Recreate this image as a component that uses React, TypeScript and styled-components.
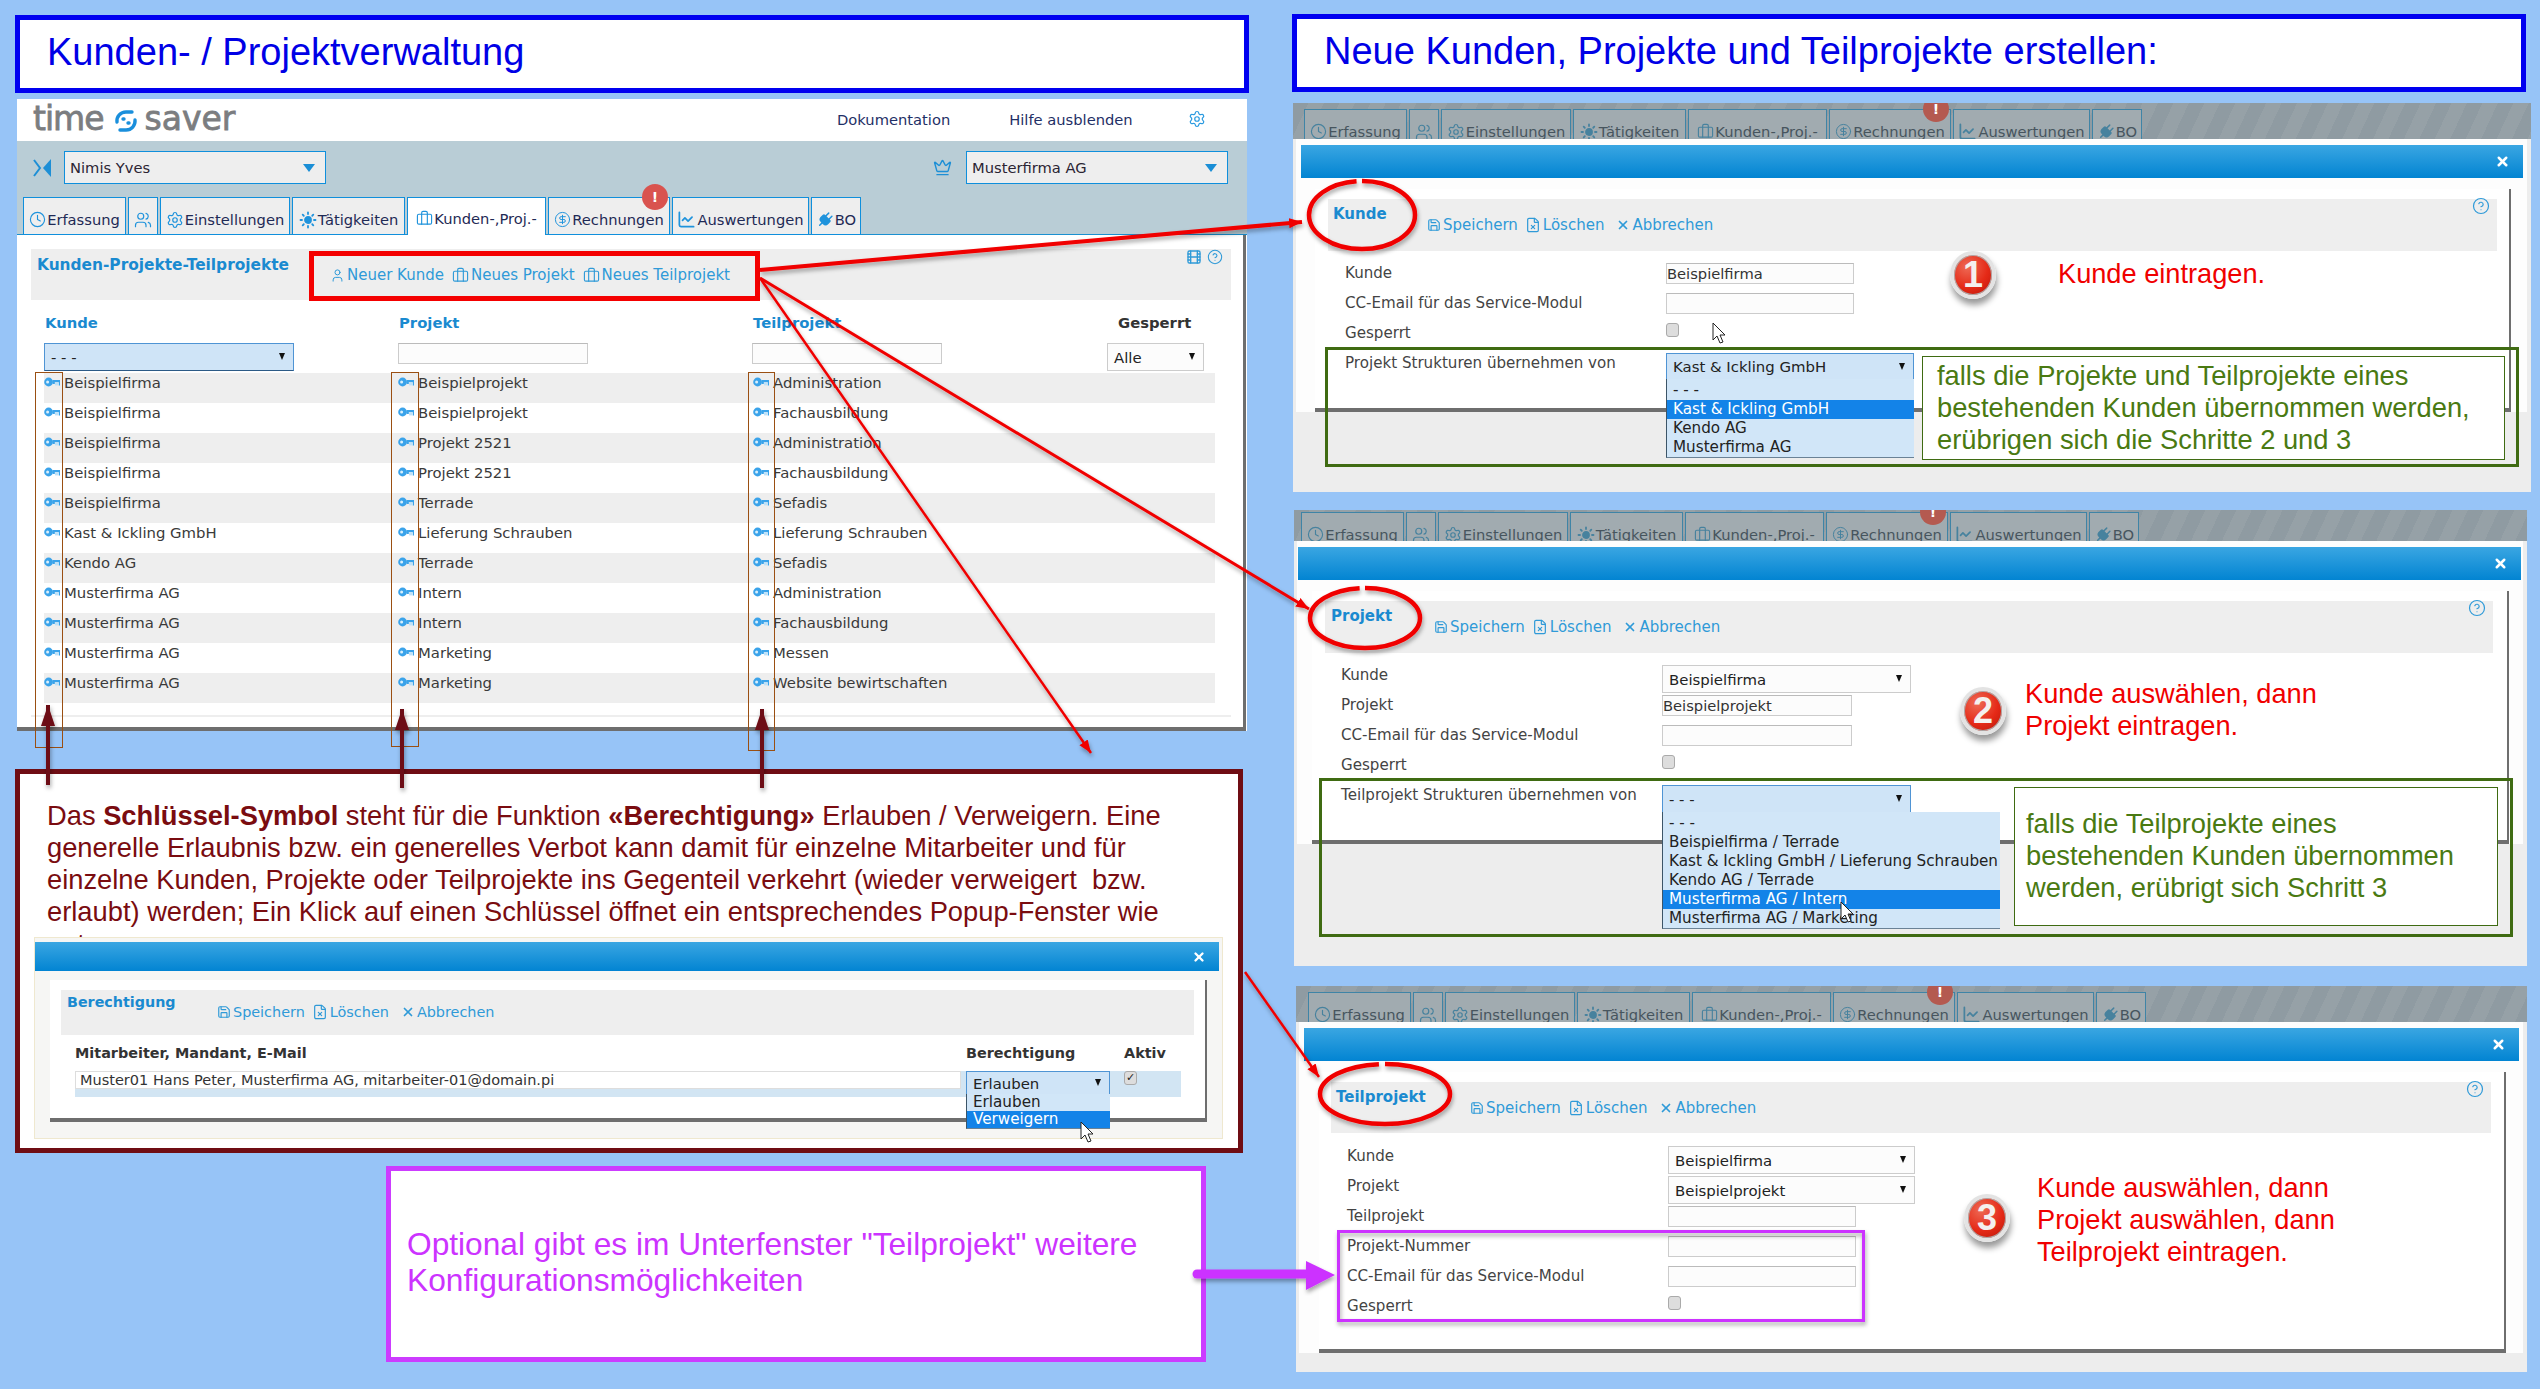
import type { ReactNode } from 'react';
import styled, { createGlobalStyle } from 'styled-components';
import {
  Briefcase,
  ChartLine,
  CircleDollarSign,
  CircleHelp,
  Clock,
  Crown,
  FileX,
  Film,
  Plug,
  Save,
  Settings,
  Sun,
  User,
  Users,
  X,
} from 'lucide-react';

const APP_FONT = '"DejaVu Sans", Verdana, sans-serif';
const NOTE_FONT = '"Liberation Sans", Arial, sans-serif';
const LINK_BLUE = '#2f9ad8';

const GlobalStyle = createGlobalStyle`
  html, body {
    margin: 0;
    padding: 0;
    background: #97c4f7;
  }
  * {
    box-sizing: border-box;
  }
`;

const Page = styled.div`
  position: relative;
  width: 2540px;
  height: 1389px;
  overflow: hidden;
  padding: 14px 0 0 15px;
  display: grid;
  grid-template-columns: 1234px 1240px;
  column-gap: 43px;
  align-items: start;
  background: #97c4f7;
  font-family: ${APP_FONT};
`;

const LeftColumn = styled.div`
  display: flex;
  flex-direction: column;
  padding-top: 1px;
`;

const RightColumn = styled.div`
  display: flex;
  flex-direction: column;
`;

const TitleBox = styled.div`
  width: 1234px;
  height: 78px;
  border: 5px solid #0000f0;
  background: #fff;
  padding: 0 0 3px 27px;
  display: flex;
  align-items: center;
`;

const TitleText = styled.h1`
  margin: 0;
  font-family: ${NOTE_FONT};
  font-size: 38px;
  font-weight: 400;
  color: #0000e6;
  white-space: nowrap;
`;

/* ---- main app screenshot ---- */

const AppPanel = styled.section`
  margin: 6px 0 0 2px;
  width: 1230px;
  height: 632px;
  background: #fff;
`;

const AppHeader = styled.header`
  height: 42px;
  display: flex;
  align-items: center;
  padding: 0 0 2px 16px;
`;

const Logo = styled.div`
  display: flex;
  align-items: center;
  width: 202px;
  font-size: 33px;
  line-height: 32px;
  color: #7b7d80;
  -webkit-text-stroke: 0.8px #7b7d80;
`;

const LogoWord = styled.span<{ $spacing: number }>`
  letter-spacing: ${(p) => p.$spacing}px;
`;

const LogoMarkWrap = styled.span`
  display: flex;
  margin: 3px 7px 0 10px;
`;

const HeaderLink = styled.a<{ $left: number }>`
  margin-left: ${(p) => p.$left}px;
  font-size: 14.7px;
  color: #1f2f66;
  white-space: nowrap;
`;

const GearWrap = styled.span`
  margin-left: 55px;
  display: flex;
  color: #2a9ae0;
`;

const Toolbar = styled.div`
  height: 94px;
  background: #b9cdd6;
  border-bottom: 1.5px solid #1a90d0;
  padding-top: 10px;
`;

const PickerRow = styled.div`
  display: flex;
  align-items: center;
  padding: 0 19px 0 16px;
`;

const PickerIcon = styled.span<{ $push?: boolean }>`
  display: flex;
  margin-left: ${(p) => (p.$push ? 'auto' : '0')};
  color: #1d8fd6;
`;

const Picker = styled.div<{ $left: number }>`
  margin-left: ${(p) => p.$left}px;
  width: 262px;
  height: 33px;
  border: 1.5px solid #0f8fdc;
  background: #eee;
  padding: 0 10px 0 5px;
  display: flex;
  align-items: center;
  justify-content: space-between;
  font-size: 14.7px;
  color: #2b2433;
`;

const PickerCaret = styled.span`
  width: 0;
  height: 0;
  border-left: 6px solid transparent;
  border-right: 6px solid transparent;
  border-top: 8px solid #1a8ed6;
`;

const TabStrip = styled.nav<{ $left: number; $top: number }>`
  margin: ${(p) => p.$top}px 0 0 ${(p) => p.$left}px;
  display: flex;
  position: relative;
`;

const Tab = styled.div<{ $w: number; $active?: boolean; $faded?: boolean }>`
  width: ${(p) => p.$w}px;
  height: 38px;
  margin-right: 2px;
  flex: none;
  border: 1.5px solid ${(p) => (p.$faded ? '#3f84a6' : '#0f8fdc')};
  border-bottom: ${(p) => (p.$active ? 'none' : undefined)};
  background: ${(p) => (p.$faded ? '#a1abb0' : p.$active ? '#fff' : '#eee')};
  color: ${(p) => (p.$faded ? '#47555e' : '#1f2a55')};
  padding-top: ${(p) => (p.$active ? 4 : 7)}px;
  display: flex;
  align-items: center;
  justify-content: center;
  gap: 1px;
  font-size: 14.7px;
  white-space: nowrap;
  svg {
    color: ${(p) => (p.$faded ? '#47829e' : '#1f93dc')};
    flex: none;
  }
`;

const TabBadge = styled.span<{ $x: number; $faded?: boolean }>`
  position: absolute;
  left: ${(p) => p.$x}px;
  top: -13px;
  width: 26px;
  height: 26px;
  border-radius: 50%;
  background: ${(p) => (p.$faded ? '#b45a50' : '#d9534f')};
  color: #fff;
  font-size: 14px;
  font-weight: 700;
  text-align: center;
  line-height: 26px;
`;

const TiltedPlug = styled(Plug)`
  transform: rotate(45deg);
`;

const AppBody = styled.div`
  width: 1229px;
  height: 496px;
  border-right: 3px solid #6e6e6e;
  border-bottom: 4px solid #6e6e6e;
  padding: 14px 12px 0 14px;
`;

const PanelHead = styled.div`
  height: 51px;
  background: #eee;
  display: flex;
  align-items: flex-start;
`;

const PanelTitle = styled.h2`
  margin: 6px 0 0 6px;
  width: 290px;
  flex: none;
  font-size: 15.4px;
  line-height: 20px;
  font-weight: 700;
  color: #1a8ad0;
  white-space: nowrap;
`;

const ActionBar = styled.div<{ $top: number; $left: number; $size: number; $gap: number }>`
  margin: ${(p) => p.$top}px 0 0 ${(p) => p.$left}px;
  display: flex;
  gap: ${(p) => p.$gap}px;
  font-size: ${(p) => p.$size}px;
  line-height: 20px;
  color: ${LINK_BLUE};
  white-space: nowrap;
`;

const Action = styled.span<{ $extra?: number }>`
  display: flex;
  align-items: center;
  gap: 2px;
  margin-left: ${(p) => p.$extra ?? 0}px;
`;

const PanelTools = styled.div`
  margin: 0 8px 0 auto;
  display: flex;
  gap: 5px;
  color: ${LINK_BLUE};
`;

const TableWrap = styled.div`
  padding: 0 16px 13px 13px;
  border-bottom: 2px solid #eee;
  height: 417px;
`;

const TableGrid = styled.div`
  display: grid;
  grid-template-columns: 354px 354px 355px 108px;
`;

const ColHead = styled.div<{ $dark?: boolean }>`
  padding: 13px 0 0 ${(p) => (p.$dark ? 11 : 1)}px;
  height: 43px;
  font-size: 14.8px;
  line-height: 20px;
  font-weight: 700;
  color: ${(p) => (p.$dark ? '#333' : '#1a8ad0')};
`;

const FilterCell = styled.div`
  height: 30px;
`;

const DataRow = styled.div`
  grid-column: 1 / -1;
  height: 30px;
  display: grid;
  grid-template-columns: 354px 355px 462px;
  &:nth-of-type(odd) {
    background: #eee;
  }
`;

const DataCell = styled.div`
  display: flex;
  align-items: flex-start;
  gap: 4px;
  font-size: 14.85px;
  line-height: 20px;
  color: #3a3a3a;
  white-space: nowrap;
  svg {
    flex: none;
    margin-top: 3px;
  }
`;

const TextInput = styled.div<{ $w?: number }>`
  width: ${(p) => p.$w ?? 190}px;
  height: 21px;
  border: 1px solid #ccc;
  border-top-color: #bbb;
  background: #fcfcfc;
  font-size: 14.7px;
  line-height: 20px;
  color: #333;
  white-space: nowrap;
  overflow: hidden;
`;

const FakeSelect = styled.div<{ $w: number; $h?: number; $focus?: boolean }>`
  position: relative;
  width: ${(p) => p.$w}px;
  height: ${(p) => p.$h ?? 28}px;
  border: 1px solid ${(p) => (p.$focus ? '#4f94d4' : '#ccc')};
  border-bottom: ${(p) => (p.$focus ? '1.5px solid #2c5a86' : undefined)};
  background: ${(p) => (p.$focus ? '#cfe4f7' : '#fcfcfc')};
  padding: 1px 8px 0 6px;
  display: flex;
  align-items: center;
  justify-content: space-between;
  font-size: 14.9px;
  color: #222;
  white-space: nowrap;
`;

const SelectCaret = styled.span`
  width: 0;
  height: 0;
  margin-top: -2px;
  border-left: 3px solid transparent;
  border-right: 3px solid transparent;
  border-top: 7px solid #111;
`;

const OptionList = styled.ul<{ $w: number; $rowH: number; $pad: number }>`
  position: absolute;
  left: -1px;
  top: 100%;
  z-index: 2;
  width: ${(p) => p.$w}px;
  margin: 0;
  padding: ${(p) => p.$pad}px 0 0;
  list-style: none;
  background: #d1e6f8;
  border-left: 1px solid #3c5568;
  border-bottom: 1px solid #6a8296;
  font-size: 15.2px;
  li {
    height: ${(p) => p.$rowH}px;
    line-height: ${(p) => p.$rowH}px;
    padding-left: 6px;
    color: #222;
  }
`;

const ActiveOption = styled.li`
  background: #1383e8;
  && {
    color: #fff;
  }
`;

/* ---- note with popup ---- */

const NoteBox = styled.section`
  margin-top: 38px;
  width: 1228px;
  height: 384px;
  border: 5px solid #6f0d14;
  background: #fff;
  padding-top: 26px;
`;

const NoteText = styled.p`
  margin: 0 0 0 27px;
  height: 137px;
  overflow: hidden;
  font-family: ${NOTE_FONT};
  font-size: 27.3px;
  line-height: 32px;
  color: #7a0c10;
  white-space: nowrap;
`;

const Popup = styled.div`
  margin-left: 14px;
  width: 1189px;
  height: 202px;
  background: #f6f6f4;
  border: 1px solid #efe8cf;
  padding-top: 4px;
`;

const BlueBar = styled.div<{ $left: number; $w: number; $h: number }>`
  margin-left: ${(p) => p.$left}px;
  width: ${(p) => p.$w}px;
  height: ${(p) => p.$h}px;
  background: linear-gradient(#3aa6e2, #0284d2);
  padding-right: 13px;
  display: flex;
  align-items: center;
  justify-content: flex-end;
  color: #fff;
`;

const Card = styled.div<{ $left: number; $w: number; $h: number; $gap: number }>`
  margin: ${(p) => p.$gap}px 0 0 ${(p) => p.$left}px;
  width: ${(p) => p.$w}px;
  height: ${(p) => p.$h}px;
  background: #fff;
  border-right: 2px solid #6e6e6e;
  border-bottom: 4px solid #6e6e6e;
  padding-top: 10px;
`;

const CardHead = styled.div<{ $left: number; $w: number; $h: number }>`
  margin-left: ${(p) => p.$left}px;
  width: ${(p) => p.$w}px;
  height: ${(p) => p.$h}px;
  background: #eee;
  display: flex;
  align-items: flex-start;
`;

const CardTitle = styled.h3<{ $w: number; $left: number; $top: number; $size: number }>`
  margin: ${(p) => p.$top}px 0 0 ${(p) => p.$left}px;
  width: ${(p) => p.$w}px;
  flex: none;
  font-size: ${(p) => p.$size}px;
  line-height: 20px;
  font-weight: 700;
  color: #1a8ad0;
  white-space: nowrap;
`;

const HelpIcon = styled.span`
  margin: -2px 7px 0 auto;
  display: flex;
  color: ${LINK_BLUE};
`;

const RightsGrid = styled.div`
  margin: 8px 0 0 25px;
  width: 1106px;
  display: grid;
  grid-template-columns: 891px 158px 57px;
`;

const RightsHead = styled.div`
  height: 28px;
  font-size: 14.4px;
  font-weight: 700;
  line-height: 20px;
  color: #333;
`;

const RightsRow = styled.div`
  grid-column: 1 / -1;
  height: 26px;
  background: #d2e5f3;
  display: grid;
  grid-template-columns: 891px 158px 57px;
`;

const RightsInput = styled.div`
  width: 886px;
  height: 18px;
  background: #fff;
  border: 1px solid #ddd;
  padding-left: 4px;
  font-size: 14.5px;
  line-height: 16px;
  color: #333;
  white-space: nowrap;
`;

const CheckBox = styled.span`
  display: block;
  width: 13px;
  height: 14px;
  border: 1px solid #aaa;
  border-radius: 3px;
  background: #ddd;
  font-size: 11px;
  line-height: 12px;
  text-align: center;
  color: #222;
`;

/* ---- optional box ---- */

const OptionalBox = styled.section`
  margin: 13px 0 0 371px;
  width: 820px;
  height: 196px;
  border: 5px solid #cc3cff;
  background: #fff;
  padding: 55px 0 0 16px;
  font-family: ${NOTE_FONT};
  font-size: 31.7px;
  line-height: 36px;
  color: #cc33ff;
  white-space: nowrap;
`;

/* ---- step dialogs ---- */

const Shot = styled.section<{ $top: number; $left: number; $w: number; $h: number }>`
  position: relative;
  margin: ${(p) => p.$top}px 0 0 ${(p) => p.$left}px;
  width: ${(p) => p.$w}px;
  height: ${(p) => p.$h}px;
  background: #ededed;
  overflow: hidden;
`;

const FadedBand = styled.div<{ $h: number }>`
  height: ${(p) => p.$h}px;
  overflow: hidden;
  background: repeating-linear-gradient(115deg, #8f9ba2 0 14px, #96a1a7 14px 28px);
`;

const Dialog = styled.div`
  margin: 0 4px 0 3px;
  background: #fdfdfd;
  padding-top: 6px;
`;

const FormArea = styled.div<{ $top: number; $left: number }>`
  padding: ${(p) => p.$top}px 0 0 ${(p) => p.$left}px;
`;

const FormRow = styled.div`
  height: 30px;
  display: grid;
  grid-template-columns: 321px 1fr;
  font-size: 15.1px;
  line-height: 20px;
  color: #444;
  white-space: nowrap;
`;

const GreenFrame = styled.div<{ $x: number; $y: number; $w: number; $h: number }>`
  position: absolute;
  left: ${(p) => p.$x}px;
  top: ${(p) => p.$y}px;
  width: ${(p) => p.$w}px;
  height: ${(p) => p.$h}px;
  border: 3px solid #3f6b12;
  pointer-events: none;
`;

const Callout = styled.div<{ $x: number; $y: number; $w: number; $h: number; $padX: number; $padY: number }>`
  position: absolute;
  z-index: 3;
  left: ${(p) => p.$x}px;
  top: ${(p) => p.$y}px;
  width: ${(p) => p.$w}px;
  height: ${(p) => p.$h}px;
  border: 1px solid #3f6b12;
  background: #fff;
  padding: ${(p) => p.$padY}px 0 0 ${(p) => p.$padX}px;
  font-family: ${NOTE_FONT};
  font-size: 27.3px;
  line-height: 32px;
  color: #4a7a12;
  white-space: nowrap;
`;

const HintText = styled.p<{ $x: number; $y: number }>`
  position: absolute;
  left: ${(p) => p.$x}px;
  top: ${(p) => p.$y}px;
  margin: 0;
  font-family: ${NOTE_FONT};
  font-size: 27.2px;
  line-height: 32px;
  color: #f00000;
  white-space: nowrap;
`;

const StepBadge = styled.span<{ $cx: number; $cy: number }>`
  position: absolute;
  left: ${(p) => p.$cx - 23}px;
  top: ${(p) => p.$cy - 24}px;
  width: 46px;
  height: 48px;
  border-radius: 50%;
  border: 4px solid #e3e3e3;
  background: radial-gradient(circle at 35% 30%, #ee6a55, #e52a17 55%, #b81408);
  box-shadow: 1px 6px 6px rgba(0, 0, 0, 0.4), inset 0 0 0 1px #a8a8a8;
  font-family: ${NOTE_FONT};
  font-size: 36px;
  font-weight: 700;
  line-height: 40px;
  text-align: center;
  color: #f4f0ee;
`;

const Overlay = styled.svg`
  position: absolute;
  left: 0;
  top: 0;
  z-index: 5;
  pointer-events: none;
`;

/* ---- small drawings ---- */

const KeyIcon = () => (
  <svg width="16" height="13" viewBox="0 0 16 13" fill="#3aa3ea">
    <circle cx="4.6" cy="6" r="4.4" />
    <circle cx="3.6" cy="6" r="1.5" fill="#d9effc" />
    <path d="M8.5 4H16v5.4h-1.2V6.2h-4V8H9z" />
    <rect x="11" y="6.4" width="3.6" height="3" fill="#bfe2f8" />
  </svg>
);

const LogoMark = () => (
  <svg width="24" height="24" viewBox="0 0 24 24" fill="none" stroke="#1a8fdc" strokeWidth="3.4" strokeLinecap="round">
    <path d="M3 13a9 9 0 0 1 9-10h6" />
    <path d="M21 11a9 9 0 0 1-9 10H6" />
    <path d="M9 10h1M14 14h1" />
  </svg>
);

const PersonArrows = () => (
  <svg width="20" height="24" viewBox="0 0 20 24" fill="#1d8fd6">
    <path d="M1 4l6 8-6 8" fill="none" stroke="#1d8fd6" strokeWidth="2" />
    <path d="M18 3v18l-8-9z" />
  </svg>
);

const MousePointer = ({ x, y }: { x: number; y: number }) => (
  <path
    transform={`translate(${x} ${y})`}
    d="M0 0v17l4-4 3 7 3-1-3-7h5z"
    fill="#fff"
    stroke="#222"
    strokeWidth="1"
  />
);

/* ---- data ---- */

const kunden = [
  'Beispielfirma',
  'Beispielfirma',
  'Beispielfirma',
  'Beispielfirma',
  'Beispielfirma',
  'Kast & Ickling GmbH',
  'Kendo AG',
  'Musterfirma AG',
  'Musterfirma AG',
  'Musterfirma AG',
  'Musterfirma AG',
];
const projekte = [
  'Beispielprojekt',
  'Beispielprojekt',
  'Projekt 2521',
  'Projekt 2521',
  'Terrade',
  'Lieferung Schrauben',
  'Terrade',
  'Intern',
  'Intern',
  'Marketing',
  'Marketing',
];
const teilprojekte = [
  'Administration',
  'Fachausbildung',
  'Administration',
  'Fachausbildung',
  'Sefadis',
  'Lieferung Schrauben',
  'Sefadis',
  'Administration',
  'Fachausbildung',
  'Messen',
  'Website bewirtschaften',
];

const tabs = [
  { w: 103, label: 'Erfassung', icon: <Clock size={17} strokeWidth={1.6} /> },
  { w: 30, label: '', icon: <Users size={18} strokeWidth={1.6} /> },
  { w: 130, label: 'Einstellungen', icon: <Settings size={18} strokeWidth={1.6} /> },
  { w: 113, label: 'Tätigkeiten', icon: <Sun size={18} strokeWidth={2.4} fill="currentColor" /> },
  { w: 139, label: 'Kunden-,Proj.-', icon: <Briefcase size={17} strokeWidth={1.6} />, active: true },
  { w: 122, label: 'Rechnungen', icon: <CircleDollarSign size={17} strokeWidth={1.4} /> },
  { w: 137, label: 'Auswertungen', icon: <ChartLine size={19} strokeWidth={2.2} /> },
  { w: 50, label: 'BO', icon: <TiltedPlug size={18} strokeWidth={2} fill="currentColor" /> },
];

const TabRow = ({ left, top, faded }: { left: number; top: number; faded?: boolean }) => (
  <TabStrip $left={left} $top={top}>
    {tabs.map((t) => (
      <Tab key={t.w} $w={t.w} $active={!faded && t.active} $faded={faded}>
        {t.icon}
        {t.label}
      </Tab>
    ))}
    <TabBadge $x={619} $faded={faded}>
      !
    </TabBadge>
  </TabStrip>
);

const DialogActions = ({ top, size }: { top: number; size: number }) => (
  <ActionBar $top={top} $left={0} $size={size} $gap={7}>
    <Action>
      <Save size={14} strokeWidth={2} />
      Speichern
    </Action>
    <Action>
      <FileX size={16} strokeWidth={1.8} />
      Löschen
    </Action>
    <Action $extra={5}>
      <X size={14} strokeWidth={3} />
      Abbrechen
    </Action>
  </ActionBar>
);

interface StepShotProps {
  top: number;
  left: number;
  w: number;
  h: number;
  bandH: number;
  tabLeft: number;
  tabTop: number;
  bar: { left: number; w: number };
  card: { left: number; w: number; h: number };
  head: { left: number; w: number; h: number };
  title: string;
  titleW: number;
  titleLeft: number;
  formTop: number;
  formLeft: number;
  rows: ReactNode;
  extras: ReactNode;
}

const StepShot = (p: StepShotProps) => (
  <Shot $top={p.top} $left={p.left} $w={p.w} $h={p.h}>
    <FadedBand $h={p.bandH}>
      <TabRow left={p.tabLeft} top={p.tabTop} faded />
    </FadedBand>
    <Dialog>
      <BlueBar $left={p.bar.left} $w={p.bar.w} $h={33}>
        <X size={15} strokeWidth={4} />
      </BlueBar>
      <Card $left={p.card.left} $w={p.card.w} $h={p.card.h} $gap={11}>
        <CardHead $left={p.head.left} $w={p.head.w} $h={p.head.h}>
          <CardTitle $w={p.titleW} $left={p.titleLeft} $top={5} $size={15}>
            {p.title}
          </CardTitle>
          <DialogActions top={16} size={15} />
          <HelpIcon>
            <CircleHelp size={18} strokeWidth={1.6} />
          </HelpIcon>
        </CardHead>
        <FormArea $top={p.formTop} $left={p.formLeft}>
          {p.rows}
        </FormArea>
      </Card>
    </Dialog>
    {p.extras}
  </Shot>
);

export default function App() {
  return (
    <Page>
      <GlobalStyle />
      <LeftColumn>
        <TitleBox>
          <TitleText>Kunden- / Projektverwaltung</TitleText>
        </TitleBox>

        <AppPanel>
          <AppHeader>
            <Logo>
              <LogoWord $spacing={-1}>time</LogoWord>
              <LogoMarkWrap>
                <LogoMark />
              </LogoMarkWrap>
              <LogoWord $spacing={0}>saver</LogoWord>
            </Logo>
            <HeaderLink $left={602}>Dokumentation</HeaderLink>
            <HeaderLink $left={59}>Hilfe ausblenden</HeaderLink>
            <GearWrap>
              <Settings size={18} strokeWidth={1.6} />
            </GearWrap>
          </AppHeader>

          <Toolbar>
            <PickerRow>
              <PickerIcon>
                <PersonArrows />
              </PickerIcon>
              <Picker $left={11}>
                Nimis Yves
                <PickerCaret />
              </Picker>
              <PickerIcon $push>
                <Crown size={19} strokeWidth={1.8} />
              </PickerIcon>
              <Picker $left={14}>
                Musterfirma AG
                <PickerCaret />
              </Picker>
            </PickerRow>
            <TabRow left={6} top={13} />
          </Toolbar>

          <AppBody>
            <PanelHead>
              <PanelTitle>Kunden-Projekte-Teilprojekte</PanelTitle>
              <ActionBar $top={16} $left={3} $size={15} $gap={8}>
                <Action>
                  <User size={15} strokeWidth={1.6} />
                  Neuer Kunde
                </Action>
                <Action>
                  <Briefcase size={17} strokeWidth={1.6} />
                  Neues Projekt
                </Action>
                <Action>
                  <Briefcase size={17} strokeWidth={1.6} />
                  Neues Teilprojekt
                </Action>
              </ActionBar>
              <PanelTools>
                <Film size={16} strokeWidth={2} />
                <CircleHelp size={16} strokeWidth={1.6} />
              </PanelTools>
            </PanelHead>

            <TableWrap>
              <TableGrid>
                <ColHead>Kunde</ColHead>
                <ColHead>Projekt</ColHead>
                <ColHead>Teilprojekt</ColHead>
                <ColHead $dark>Gesperrt</ColHead>
                <FilterCell>
                  <FakeSelect $w={250} $focus>
                    - - -
                    <SelectCaret />
                  </FakeSelect>
                </FilterCell>
                <FilterCell>
                  <TextInput />
                </FilterCell>
                <FilterCell>
                  <TextInput />
                </FilterCell>
                <FilterCell>
                  <FakeSelect $w={97}>
                    Alle
                    <SelectCaret />
                  </FakeSelect>
                </FilterCell>
                {kunden.map((k, i) => (
                  <DataRow key={i}>
                    <DataCell>
                      <KeyIcon />
                      {k}
                    </DataCell>
                    <DataCell>
                      <KeyIcon />
                      {projekte[i]}
                    </DataCell>
                    <DataCell>
                      <KeyIcon />
                      {teilprojekte[i]}
                    </DataCell>
                  </DataRow>
                ))}
              </TableGrid>
            </TableWrap>
          </AppBody>
        </AppPanel>

        <NoteBox>
          <NoteText>
            Das <b>Schlüssel-Symbol</b> steht für die Funktion <b>«Berechtigung»</b> Erlauben / Verweigern. Eine
            <br />
            generelle Erlaubnis bzw. ein generelles Verbot kann damit für einzelne Mitarbeiter und für
            <br />
            einzelne Kunden, Projekte oder Teilprojekte ins Gegenteil verkehrt (wieder verweigert&nbsp; bzw.
            <br />
            erlaubt) werden; Ein Klick auf einen Schlüssel öffnet ein entsprechendes Popup-Fenster wie
            <br />
            unten.
          </NoteText>
          <Popup>
            <BlueBar $left={0} $w={1184} $h={29}>
              <X size={14} strokeWidth={4} />
            </BlueBar>
            <Card $left={15} $w={1157} $h={142} $gap={9}>
              <CardHead $left={11} $w={1133} $h={45}>
                <CardTitle $w={150} $left={6} $top={2} $size={14.3}>
                  Berechtigung
                </CardTitle>
                <DialogActions top={12} size={14.4} />
              </CardHead>
              <RightsGrid>
                <RightsHead>Mitarbeiter, Mandant, E-Mail</RightsHead>
                <RightsHead>Berechtigung</RightsHead>
                <RightsHead>Aktiv</RightsHead>
                <RightsRow>
                  <RightsInput>Muster01 Hans Peter, Musterfirma AG, mitarbeiter-01@domain.pi</RightsInput>
                  <FakeSelect $w={144} $h={24} $focus>
                    Erlauben
                    <SelectCaret />
                    <OptionList $w={144} $rowH={17} $pad={0}>
                      <li>Erlauben</li>
                      <ActiveOption>Verweigern</ActiveOption>
                    </OptionList>
                  </FakeSelect>
                  <CheckBox>✓</CheckBox>
                </RightsRow>
              </RightsGrid>
            </Card>
          </Popup>
        </NoteBox>

        <OptionalBox>
          Optional gibt es im Unterfenster "Teilprojekt" weitere
          <br />
          Konfigurationsmöglichkeiten
        </OptionalBox>
      </LeftColumn>

      <RightColumn>
        <TitleBox>
          <TitleText>Neue Kunden, Projekte und Teilprojekte erstellen:</TitleText>
        </TitleBox>

        <StepShot
          top={11}
          left={1}
          w={1238}
          h={389}
          bandH={36}
          tabLeft={11}
          tabTop={6}
          bar={{ left: 5, w: 1222 }}
          card={{ left: 19, w: 1196, h: 223 }}
          head={{ left: 13, w: 1169, h: 52 }}
          title="Kunde"
          titleW={94}
          titleLeft={5}
          formTop={12}
          formLeft={30}
          rows={
            <>
              <FormRow>
                Kunde
                <TextInput $w={188}>Beispielfirma</TextInput>
              </FormRow>
              <FormRow>
                CC-Email für das Service-Modul
                <TextInput $w={188} />
              </FormRow>
              <FormRow>
                Gesperrt
                <CheckBox />
              </FormRow>
              <FormRow>
                Projekt Strukturen übernehmen von
                <FakeSelect $w={248} $h={27} $focus>
                  Kast &amp; Ickling GmbH
                  <SelectCaret />
                  <OptionList $w={248} $rowH={19} $pad={2}>
                    <li>- - -</li>
                    <ActiveOption>Kast &amp; Ickling GmbH</ActiveOption>
                    <li>Kendo AG</li>
                    <li>Musterfirma AG</li>
                  </OptionList>
                </FakeSelect>
              </FormRow>
            </>
          }
          extras={
            <>
              <GreenFrame $x={32} $y={244} $w={1194} $h={120} />
              <Callout $x={629} $y={253} $w={583} $h={104} $padX={14} $padY={3}>
                falls die Projekte und Teilprojekte eines
                <br />
                bestehenden Kunden übernommen werden,
                <br />
                erübrigen sich die Schritte 2 und 3
              </Callout>
              <StepBadge $cx={680} $cy={172}>
                1
              </StepBadge>
              <HintText $x={765} $y={155}>
                Kunde eintragen.
              </HintText>
            </>
          }
        />

        <StepShot
          top={18}
          left={2}
          w={1233}
          h={456}
          bandH={31}
          tabLeft={7}
          tabTop={2}
          bar={{ left: 1, w: 1223 }}
          card={{ left: 15, w: 1197, h: 253 }}
          head={{ left: 13, w: 1168, h: 52 }}
          title="Projekt"
          titleW={103}
          titleLeft={6}
          formTop={12}
          formLeft={29}
          rows={
            <>
              <FormRow>
                Kunde
                <FakeSelect $w={249}>
                  Beispielfirma
                  <SelectCaret />
                </FakeSelect>
              </FormRow>
              <FormRow>
                Projekt
                <TextInput>Beispielprojekt</TextInput>
              </FormRow>
              <FormRow>
                CC-Email für das Service-Modul
                <TextInput />
              </FormRow>
              <FormRow>
                Gesperrt
                <CheckBox />
              </FormRow>
              <FormRow>
                Teilprojekt Strukturen übernehmen von
                <FakeSelect $w={249} $focus>
                  - - -
                  <SelectCaret />
                  <OptionList $w={338} $rowH={19} $pad={2}>
                    <li>- - -</li>
                    <li>Beispielfirma / Terrade</li>
                    <li>Kast &amp; Ickling GmbH / Lieferung Schrauben</li>
                    <li>Kendo AG / Terrade</li>
                    <ActiveOption>Musterfirma AG / Intern</ActiveOption>
                    <li>Musterfirma AG / Marketing</li>
                  </OptionList>
                </FakeSelect>
              </FormRow>
            </>
          }
          extras={
            <>
              <GreenFrame $x={25} $y={268} $w={1194} $h={159} />
              <Callout $x={720} $y={277} $w={484} $h={139} $padX={11} $padY={20}>
                falls die Teilprojekte eines
                <br />
                bestehenden Kunden übernommen
                <br />
                werden, erübrigt sich Schritt 3
              </Callout>
              <StepBadge $cx={689} $cy={201}>
                2
              </StepBadge>
              <HintText $x={731} $y={168}>
                Kunde auswählen, dann
                <br />
                Projekt eintragen.
              </HintText>
            </>
          }
        />

        <StepShot
          top={20}
          left={4}
          w={1231}
          h={386}
          bandH={36}
          tabLeft={12}
          tabTop={6}
          bar={{ left: 5, w: 1215 }}
          card={{ left: 20, w: 1187, h: 281 }}
          head={{ left: 12, w: 1160, h: 51 }}
          title="Teilprojekt"
          titleW={134}
          titleLeft={5}
          formTop={13}
          formLeft={28}
          rows={
            <>
              <FormRow>
                Kunde
                <FakeSelect $w={247}>
                  Beispielfirma
                  <SelectCaret />
                </FakeSelect>
              </FormRow>
              <FormRow>
                Projekt
                <FakeSelect $w={247}>
                  Beispielprojekt
                  <SelectCaret />
                </FakeSelect>
              </FormRow>
              <FormRow>
                Teilprojekt
                <TextInput $w={188} />
              </FormRow>
              <FormRow>
                Projekt-Nummer
                <TextInput $w={188} />
              </FormRow>
              <FormRow>
                CC-Email für das Service-Modul
                <TextInput $w={188} />
              </FormRow>
              <FormRow>
                Gesperrt
                <CheckBox />
              </FormRow>
            </>
          }
          extras={
            <>
              <StepBadge $cx={691} $cy={232}>
                3
              </StepBadge>
              <HintText $x={741} $y={186}>
                Kunde auswählen, dann
                <br />
                Projekt auswählen, dann
                <br />
                Teilprojekt eintragen.
              </HintText>
            </>
          }
        />
      </RightColumn>

      {/* hand-drawn annotations on top of the screenshots */}
      <Overlay width="2540" height="1389" viewBox="0 0 2540 1389" fill="none">
        <defs>
          <filter id="soft" x="-10%" y="-10%" width="120%" height="130%">
            <feDropShadow dx="1" dy="3" stdDeviation="2" floodColor="#000" floodOpacity="0.35" />
          </filter>
          <marker id="redHead" markerUnits="userSpaceOnUse" markerWidth="14" markerHeight="12" refX="13" refY="6" orient="auto">
            <path d="M0 1l13 5-13 5z" fill="#f00000" />
          </marker>
          <marker id="darkHead" markerUnits="userSpaceOnUse" markerWidth="22" markerHeight="14" refX="21" refY="7" orient="auto">
            <path d="M0 0l21 7-21 7z" fill="#6d0c14" />
          </marker>
        </defs>

        <g stroke="#9a4f12" strokeWidth="1">
          <rect x="35.5" y="372.5" width="27" height="375" />
          <rect x="391.5" y="372.5" width="27" height="374" />
          <rect x="748.5" y="372.5" width="26" height="378" />
        </g>

        <g stroke="#6d0c14" strokeWidth="4" filter="url(#soft)">
          <path d="M48 785V705" markerEnd="url(#darkHead)" />
          <path d="M402 788V709" markerEnd="url(#darkHead)" />
          <path d="M762 788V709" markerEnd="url(#darkHead)" />
        </g>

        <rect x="311.5" y="253.5" width="446" height="45" stroke="#f40000" strokeWidth="5" />

        <g stroke="#f00000" filter="url(#soft)">
          <path d="M760 270L1302 222" strokeWidth="4" markerEnd="url(#redHead)" />
          <path d="M760 278L1309 609" strokeWidth="3" markerEnd="url(#redHead)" />
          <path d="M760 278L1091 753" strokeWidth="2.5" markerEnd="url(#redHead)" />
          <path d="M1245 972L1319 1077" strokeWidth="2.5" markerEnd="url(#redHead)" />
        </g>

        <g stroke="#f00000" strokeWidth="4.5" filter="url(#soft)">
          <ellipse cx="1362" cy="215" rx="53" ry="34" pathLength={100} strokeDasharray="73 2 25 0" />
          <ellipse cx="1365" cy="618" rx="55" ry="30" pathLength={100} strokeDasharray="73 2 25 0" />
          <ellipse cx="1385" cy="1094" rx="65" ry="30" pathLength={100} strokeDasharray="73 2 25 0" />
        </g>

        <rect x="1338.5" y="1231.5" width="525" height="89" stroke="#cc33ff" strokeWidth="3" filter="url(#soft)" />

        <g filter="url(#soft)" fill="#cc33ff">
          <path d="M1197 1274H1306" stroke="#cc33ff" strokeWidth="9" strokeLinecap="round" />
          <path d="M1306 1261L1335 1275L1306 1290z" />
        </g>

        <MousePointer x={1713} y={323} />
        <MousePointer x={1841} y={902} />
        <MousePointer x={1081} y={1122} />
      </Overlay>
    </Page>
  );
}
